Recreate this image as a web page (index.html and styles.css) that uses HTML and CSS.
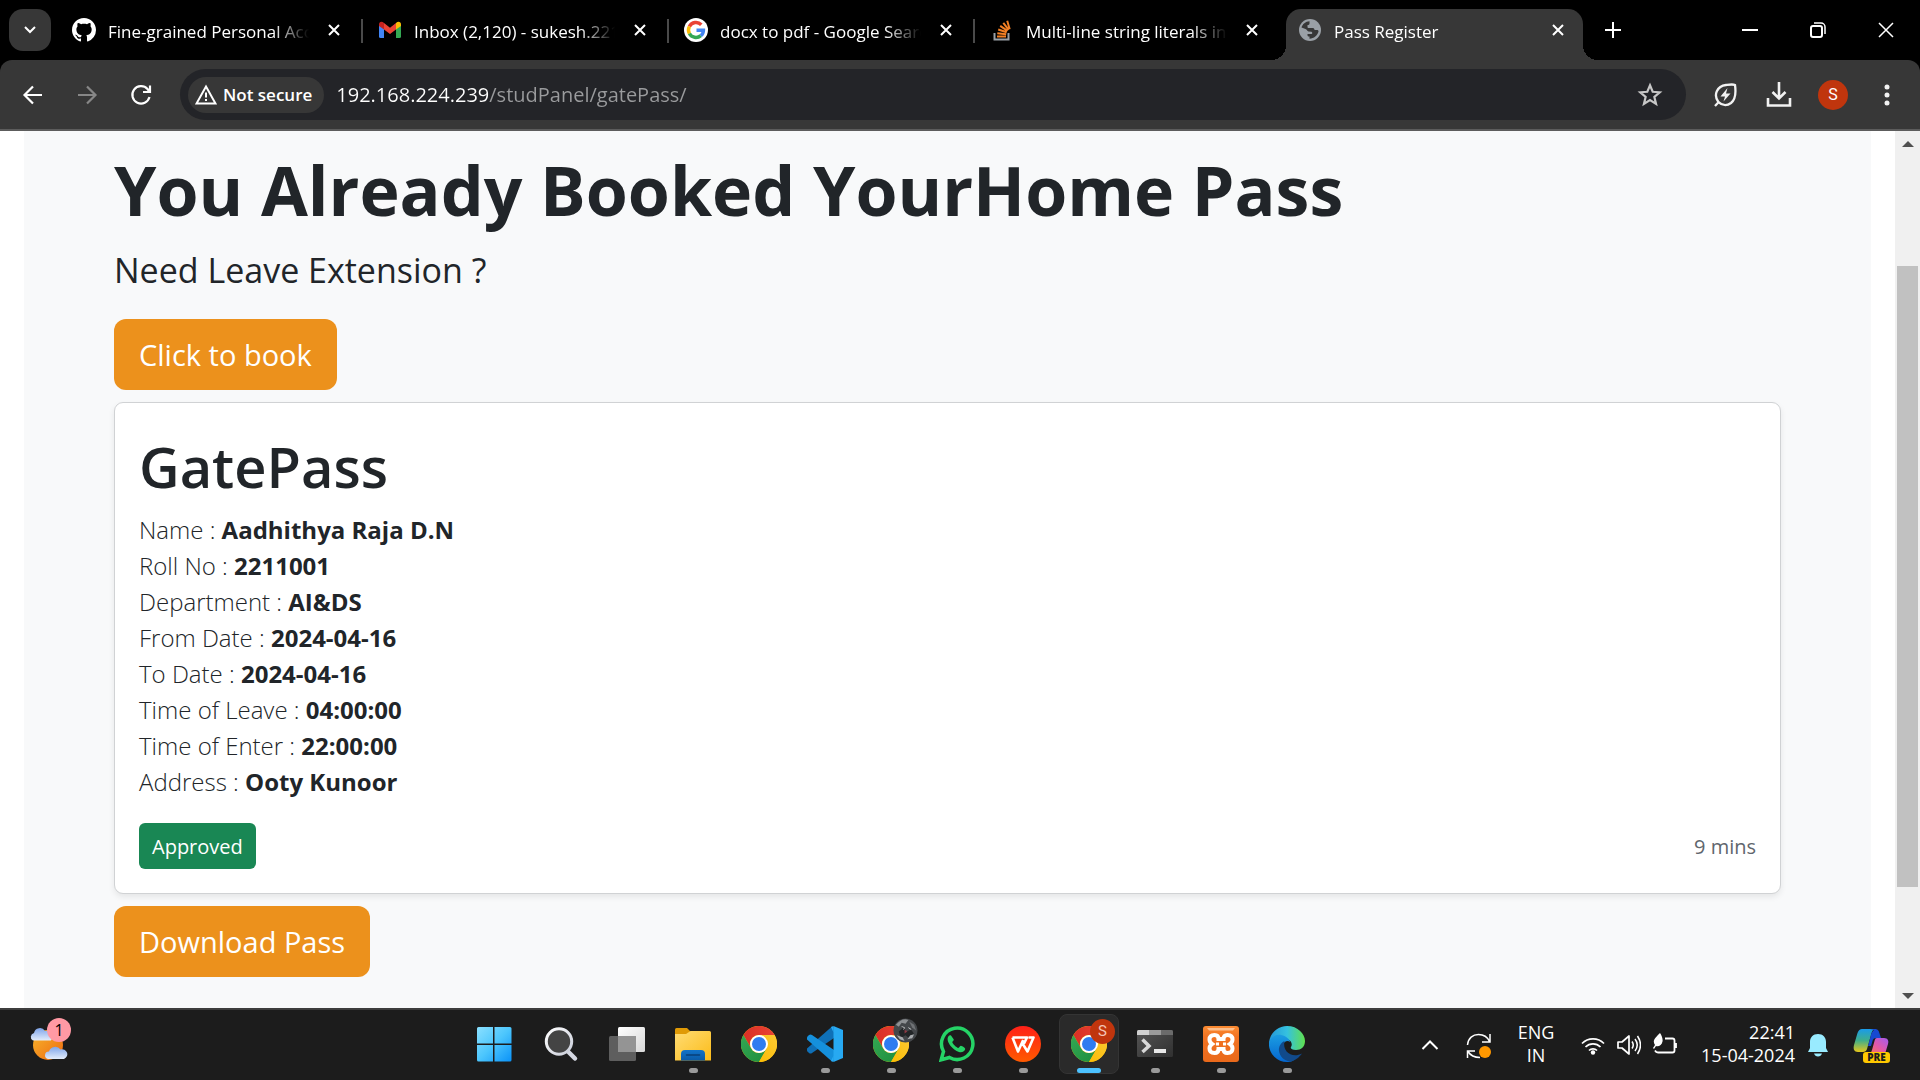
FILE: index.html
```html
<!DOCTYPE html>
<html lang="en">
<head>
<meta charset="utf-8">
<meta name="viewport" content="width=device-width, initial-scale=1">
<title>Pass Register</title>
<link rel="stylesheet" href="styles.css">
</head>
<body>
<svg class="defs" aria-hidden="true">
  <defs>
    <linearGradient id="gRed" x1="0" y1="0" x2="1" y2="0"><stop offset="0" stop-color="#d93025"/><stop offset="1" stop-color="#ea4335"/></linearGradient>
    <linearGradient id="gYellow" x1="0" y1="1" x2="1" y2="0"><stop offset="0" stop-color="#fbbc04"/><stop offset="1" stop-color="#fcc934"/></linearGradient>
    <linearGradient id="gGreen" x1="1" y1="1" x2="0" y2="0"><stop offset="0" stop-color="#1e8e3e"/><stop offset="1" stop-color="#34a853"/></linearGradient>
    <linearGradient id="gWin" x1="0" y1="0" x2="1" y2="1"><stop offset="0" stop-color="#8be0ff"/><stop offset=".5" stop-color="#4cc6fd"/><stop offset="1" stop-color="#0a92f8"/></linearGradient>
    <linearGradient id="gLens" x1="0" y1="0" x2="1" y2="1"><stop offset="0" stop-color="#fff"/><stop offset="1" stop-color="#c8ccd8"/></linearGradient>
    <linearGradient id="gPane" x1="0" y1="0" x2="1" y2="1"><stop offset="0" stop-color="#fff"/><stop offset="1" stop-color="#d8d8d8"/></linearGradient>
    <linearGradient id="gFolder" x1="0" y1="0" x2="1" y2="1"><stop offset="0" stop-color="#ffdc74"/><stop offset="1" stop-color="#fcbc19"/></linearGradient>
    <linearGradient id="gTray" x1="0" y1="0" x2="0" y2="1"><stop offset="0" stop-color="#1173c9"/><stop offset="1" stop-color="#0a5aa6"/></linearGradient>
    <linearGradient id="gWps" x1="0" y1="0" x2="0" y2="1"><stop offset="0" stop-color="#ff2018"/><stop offset="1" stop-color="#ff5a00"/></linearGradient>
    <linearGradient id="gXampp" x1="0" y1="0" x2="0" y2="1"><stop offset="0" stop-color="#fb8b32"/><stop offset=".3" stop-color="#f37322"/><stop offset="1" stop-color="#e9691b"/></linearGradient>
    <linearGradient id="gTerm" x1="0" y1="0" x2="1" y2="1"><stop offset="0" stop-color="#555"/><stop offset="1" stop-color="#303030"/></linearGradient>
    <linearGradient id="gEdgeTop" x1="0" y1="0" x2="1" y2="0"><stop offset="0" stop-color="#2497d8"/><stop offset=".5" stop-color="#35c1e0"/><stop offset="1" stop-color="#60e04e"/></linearGradient>
    <linearGradient id="gEdgeLeft" x1="0" y1="0" x2="0" y2="1"><stop offset="0" stop-color="#1b9de2"/><stop offset="1" stop-color="#0566cf"/></linearGradient>
    <linearGradient id="gSun" x1="0" y1="0" x2="1" y2="1"><stop offset="0" stop-color="#f7b52c"/><stop offset="1" stop-color="#ee6a10"/></linearGradient>
    <linearGradient id="gCloud" x1="0" y1="0" x2="0" y2="1"><stop offset="0" stop-color="#7fa5ea"/><stop offset="1" stop-color="#e4edfb"/></linearGradient>
    <linearGradient id="gPilotA" x1="0" y1="0" x2="0" y2="1"><stop offset="0" stop-color="#1a9bea"/><stop offset=".5" stop-color="#3fae8a"/><stop offset="1" stop-color="#e6c61a"/></linearGradient>
    <linearGradient id="gPilotB" x1="1" y1="0" x2="0" y2="1"><stop offset="0" stop-color="#a45cf0"/><stop offset=".5" stop-color="#e358a8"/><stop offset="1" stop-color="#fb7a4a"/></linearGradient>
    <symbol id="close" viewBox="0 0 16 16"><path d="M3 3l10 10M13 3L3 13" stroke="currentColor" stroke-width="2" fill="none"/></symbol>
    <symbol id="chrome" viewBox="0 0 36 36">
      <circle cx="18" cy="18" r="18" fill="#fbbc04"/>
      <path d="M18 9H33.6A18 18 0 0 0 2.4 9L10.2 22.5A9 9 0 0 1 18 9z" fill="url(#gRed)"/>
      <path d="M25.8 22.5L18 36A18 18 0 0 1 2.4 9l7.8 13.5a9 9 0 0 0 15.6 0z" fill="url(#gGreen)"/>
      <path d="M18 9H33.6A18 18 0 0 1 18 36l7.8-13.5A9 9 0 0 0 18 9z" fill="url(#gYellow)"/>
      <circle cx="18" cy="18" r="9" fill="#fff"/><circle cx="18" cy="18" r="7" fill="#2f7cf0"/>
    </symbol>
  </defs>
</svg>

<header class="browser">
  <div class="tabstrip">
    <button class="tab-search" aria-label="Search tabs"><svg width="16" height="16" viewBox="0 0 16 16"><path d="M3 5l5 5 5-5" stroke="#fff" stroke-width="2" fill="none"/></svg></button>
    <div class="tabs">
      <div class="tab">
        <svg class="favicon" viewBox="0 0 16 16"><path fill="#fff" d="M8 0C3.58 0 0 3.58 0 8c0 3.54 2.29 6.53 5.47 7.59.4.07.55-.17.55-.38 0-.19-.01-.82-.01-1.49-2.01.37-2.53-.49-2.69-.94-.09-.23-.48-.94-.82-1.13-.28-.15-.68-.52-.01-.53.63-.01 1.08.58 1.23.82.72 1.21 1.87.87 2.33.66.07-.52.28-.87.51-1.07-1.78-.2-3.64-.89-3.64-3.95 0-.87.31-1.59.82-2.15-.08-.2-.36-1.02.08-2.12 0 0 .67-.21 2.2.82.64-.18 1.32-.27 2-.27s1.36.09 2 .27c1.53-1.04 2.2-.82 2.2-.82.44 1.1.16 1.92.08 2.12.51.56.82 1.27.82 2.15 0 3.07-1.87 3.75-3.65 3.95.29.25.54.73.54 1.48 0 1.07-.01 1.93-.01 2.2 0 .21.15.46.55.38A8.01 8.01 0 0 0 16 8c0-4.42-3.58-8-8-8z"/></svg>
        <span class="tab-title">Fine-grained Personal Access Tokens</span>
        <button class="icon-button" aria-label="Close tab"><svg width="16" height="16"><use href="#close"/></svg></button>
      </div>
      <div class="tab">
        <svg class="favicon" viewBox="0 0 24 24"><path fill="#4285f4" d="M1 7v11.500q0 1.500 1.500 1.500H6v-9.500z"/><path fill="#34a853" d="M18 10.500V20h3.500q1.500 0 1.500-1.500V7z"/><path fill="#ea4335" d="M6 5l6 4.700L18 5v6.500l-6 4.500-6-4.500z"/><path fill="#c5221f" d="M1 6.500C1 3.500 4 3 6 5v6.500L1 8z"/><path fill="#fbbc04" d="M23 6.500C23 3.500 20 3 18 5v6.500L23 8z"/></svg>
        <span class="tab-title">Inbox (2,120) - sukesh.2211001</span>
        <button class="icon-button" aria-label="Close tab"><svg width="16" height="16"><use href="#close"/></svg></button>
      </div>
      <div class="tab">
        <svg class="favicon" viewBox="0 0 24 24"><circle cx="12" cy="12" r="12" fill="#fff"/><g fill="none" stroke-width="3.500"><path stroke="#ea4335" d="M5.400 8.500A7.400 7.400 0 0 1 17.300 6.800"/><path stroke="#fbbc04" d="M5.400 15.500A7.400 7.400 0 0 1 5.400 8.500"/><path stroke="#34a853" d="M16.800 17.600A7.400 7.400 0 0 1 5.400 15.500"/><path stroke="#4285f4" d="M12.500 12.200h6.900c0 2.300-1 4.200-2.600 5.400"/></g></svg>
        <span class="tab-title">docx to pdf - Google Search</span>
        <button class="icon-button" aria-label="Close tab"><svg width="16" height="16"><use href="#close"/></svg></button>
      </div>
      <div class="tab">
        <svg class="favicon" viewBox="0 0 24 24"><path d="M4.500 15v6.500h14V15" fill="none" stroke="#9aa0a6" stroke-width="2"/><path d="M7 18.500h9M7.300 15.200l8.900 1M8.200 11.500l8.500 2.800M10.200 7.800l7.300 5M13.300 4.800l5.400 7M17.200 2.800l2.500 8.500" stroke="#f48024" stroke-width="2"/></svg>
        <span class="tab-title">Multi-line string literals in PHP</span>
        <button class="icon-button" aria-label="Close tab"><svg width="16" height="16"><use href="#close"/></svg></button>
      </div>
      <div class="tab active">
        <svg class="favicon" viewBox="0 0 24 24"><circle cx="12" cy="12" r="11" fill="#9aa0a6"/><path d="M3.500 9.500C4.500 6 7.500 3.500 11.500 3.200v2.300c0 1-1 1.500-2 1.500v2c0 .8.500 1 1.200 1h4.300c1 0 1.500 1 1.500 2h2.500c1 0 1.500.500 1.500 1.500-1 4-4.500 7-9 7.200v-2.200c-1.500 0-2-.500-2-1.500v-1h4c1 0 1-2 0-2.200l-3-.300c-1.500-.500-1.500-2-3-2.500z" fill="#373737"/></svg>
        <span class="tab-title">Pass Register</span>
        <button class="icon-button" aria-label="Close tab"><svg width="16" height="16"><use href="#close"/></svg></button>
      </div>
    </div>
    <button class="icon-button new-tab" aria-label="New tab"><svg width="16" height="16" viewBox="0 0 16 16"><path d="M8 0v16M0 8h16" stroke="#fff" stroke-width="2"/></svg></button>
    <div class="window-controls">
      <button aria-label="Minimize"><svg width="16" height="16" viewBox="0 0 16 16"><path d="M0 8h16" stroke="#fff" stroke-width="2"/></svg></button>
      <button aria-label="Restore"><svg width="16" height="16" viewBox="0 0 16 16"><rect x="1" y="4" width="11" height="11" rx="2" fill="none" stroke="#fff" stroke-width="2"/><path d="M4 1h7a4 4 0 0 1 4 4v7" fill="none" stroke="#fff" stroke-width="1.500"/></svg></button>
      <button aria-label="Close"><svg width="16" height="16" viewBox="0 0 16 16"><path d="M1 1l14 14M15 1L1 15" stroke="#fff" stroke-width="1.500"/></svg></button>
    </div>
  </div>
  <div class="toolbar">
    <button class="nav-button" aria-label="Back"><svg width="24" height="24" viewBox="0 0 24 24"><path d="M21 12H4M12 3.500L3.500 12l8.500 8.500" stroke="#fff" stroke-width="2.200" fill="none"/></svg></button>
    <button class="nav-button" aria-label="Forward"><svg width="24" height="24" viewBox="0 0 24 24"><path d="M3 12h17M12 3.500l8.500 8.500-8.500 8.500" stroke="#878787" stroke-width="2.200" fill="none"/></svg></button>
    <button class="nav-button" aria-label="Reload"><svg width="24" height="24" viewBox="0 0 24 24"><path d="M20.500 14A8.700 8.700 0 1 1 18.500 6l1.500 2M21 2.500V9h-7" stroke="#fff" stroke-width="2.200" fill="none"/></svg></button>
    <div class="omnibox">
      <button class="security"><svg width="22" height="22" viewBox="0 0 22 22"><path d="M11 2.500L20.500 19.500H1.500z" fill="none" stroke="#fff" stroke-width="2"/><path d="M11 8.500v5M11 15v2" stroke="#fff" stroke-width="2"/></svg><span>Not secure</span></button>
      <input class="address" type="text" aria-label="Address" value="192.168.224.239/studPanel/gatePass/">
      <button class="icon-button" aria-label="Bookmark"><svg width="26" height="26" viewBox="0 0 24 24"><path d="M12 3l2.500 6 6.500.500-5 4.200 1.600 6.500L12 16.700l-5.600 3.500L8 13.700 3 9.500 9.500 9z" fill="none" stroke="#c7c7c7" stroke-width="2"/></svg></button>
    </div>
    <div class="actions">
      <button aria-label="Energy saver"><svg width="26" height="26" viewBox="0 0 26 26"><path d="M3 24l3.500-3.800C1 13 5 4 14 3c4-.5 7-1 9 0 1 7 1 14-4 18-4 3-9 2.500-12.500-.8" fill="none" stroke="#f2f2f2" stroke-width="2.300"/><path d="M15.500 6l-7 8.500h4.500L11.500 19.500 18.500 11.500H14z" fill="#f2f2f2"/></svg></button>
      <button aria-label="Downloads"><svg width="26" height="26" viewBox="0 0 26 26"><path d="M13 0v16M6.500 10l6.500 6.500 6.500-6.500M2 16v7.500h22V16" fill="none" stroke="#f2f2f2" stroke-width="2.600"/></svg></button>
      <button aria-label="Profile"><span class="avatar">S</span></button>
      <button aria-label="Menu"><svg width="26" height="26" viewBox="0 0 26 26"><g fill="#f2f2f2"><circle cx="13" cy="5" r="2.500"/><circle cx="13" cy="13" r="2.500"/><circle cx="13" cy="21" r="2.500"/></g></svg></button>
    </div>
  </div>
</header>

<div class="viewport">
  <main class="panel">
    <h1>You Already Booked YourHome Pass</h1>
    <p class="lead">Need Leave Extension ?</p>
    <a class="action" href="#book">Click to book</a>
    <section class="card">
      <h2>GatePass</h2>
      <p class="details">
        Name : <strong>Aadhithya Raja D.N</strong><br>
        Roll No : <strong>2211001</strong><br>
        Department : <strong>AI&amp;DS</strong><br>
        From Date : <strong>2024-04-16</strong><br>
        To Date : <strong>2024-04-16</strong><br>
        Time of Leave : <strong>04:00:00</strong><br>
        Time of Enter : <strong>22:00:00</strong><br>
        Address : <strong>Ooty Kunoor</strong>
      </p>
      <div class="card-foot">
        <button class="status">Approved</button>
        <small>9 mins</small>
      </div>
    </section>
    <a class="action" href="#download">Download Pass</a>
  </main>
  <div class="scrollbar" aria-hidden="true">
    <svg width="16" height="8" viewBox="0 0 16 8"><path d="M8 1l6 6H2z" fill="#505050"/></svg>
    <div class="track"><div class="thumb"></div></div>
    <svg width="16" height="8" viewBox="0 0 16 8"><path d="M8 7l6-6H2z" fill="#505050"/></svg>
  </div>
</div>

<footer class="taskbar">
  <div class="widgets">
    <button class="widget" aria-label="Weather">
      <svg width="38" height="38" viewBox="0 0 38 38"><circle cx="18" cy="20" r="15" fill="url(#gSun)"/><path d="M3 15.500a4 4 0 0 1 1-7.500 6 6 0 0 1 11-2 5 5 0 0 1 6 6 2.500 2.500 0 0 1 0 3.500z" fill="url(#gCloud)"/><path d="M18 34a3.800 3.800 0 0 1 1-7.500 6.500 6.500 0 0 1 11.500-2 5 5 0 0 1 3.500 9.500z" fill="url(#gCloud)"/></svg>
      <span class="count">1</span>
    </button>
  </div>
  <nav class="apps" aria-label="Applications">
    <button class="app" aria-label="Start"><svg viewBox="0 0 36 36"><path d="M0 2.500Q0 1 1.500 1H16v16.500H0zM17.500 1H33q1.500 0 1.500 1.500v15h-17zM0 19h16v16.500H1.500Q0 35.500 0 34zM17.500 19h17v15q0 1.500-1.500 1.500H17.500z" fill="url(#gWin)"/></svg></button>
    <button class="app" aria-label="Search"><svg viewBox="0 0 36 36"><path d="M24 24.500l8 8" stroke="#d5d8e2" stroke-width="4.500" stroke-linecap="round"/><circle cx="16" cy="15.500" r="12.700" fill="#444" stroke="url(#gLens)" stroke-width="3"/></svg></button>
    <button class="app" aria-label="Task view"><svg viewBox="0 0 36 36"><rect x="9" y="1" width="27" height="25" rx="1.500" fill="url(#gPane)"/><rect y="10" width="27" height="25" rx="1.500" fill="#686868" fill-opacity=".88"/><path d="M9 10h18v16H9z" fill="#949494"/></svg></button>
    <button class="app running" aria-label="File Explorer"><svg viewBox="0 0 36 36"><path d="M0 3.500Q0 2 1.500 2H12l4 4-2 3H0z" fill="#e09a06"/><path d="M0 8h11l4.500-3H34.500Q36 5 36 6.500V34.500H0z" fill="url(#gFolder)"/><path d="M6 34.500V28q0-4 4-4h16q4 0 4 4v6.500z" fill="url(#gTray)"/><path d="M11.500 29h13" stroke="#083f78" stroke-width="1.500" stroke-linecap="round"/></svg></button>
    <button class="app" aria-label="Chrome"><svg><use href="#chrome"/></svg></button>
    <button class="app running" aria-label="Visual Studio Code"><svg viewBox="0 0 36 36"><path d="M0 22.500L25 .5l2 1v10.500L5 27q-1.500 1-3 0L.5 25.500q-1-1.500-.5-3z" fill="#0f70b7"/><path d="M0 13.500L25 35.500l2-1V24L5 9q-1.500-1-3 0L.5 10.500q-1 1.500-.5 3z" fill="#1590dc"/><path d="M26.500 0L36 4v28l-9.500 4z" fill="#27a9f2"/><path d="M26.500 0v36l-2.500-1 2.500-5.500V6.500L24 1z" fill="#27a9f2"/></svg></button>
    <button class="app running" aria-label="Chrome, second profile"><svg><use href="#chrome"/></svg>
      <svg class="badge" viewBox="0 0 26 26"><circle cx="13" cy="13" r="12.500" fill="#44474a"/><path d="M3 7C7 2 12 0 16 2l-3 4-4-1-3 4z" fill="#8d9093"/><path d="M17 4l5 3 2 6-4-3z" fill="#6f7275"/><path d="M6 14l5-4 3 4 5-2 3 5-4 5-5-4-5 3z" fill="#222527"/><path d="M4 18l3 4 5 2-2-4zM15 22l5-1 2-4-4 1z" fill="#a8abae"/><path d="M9 9l3 1-1 2M16 10l3 2" stroke="#c9cbcd" stroke-width="1"/><path d="M12 12l3 2-3 2z" fill="#8d3b45"/></svg></button>
    <button class="app running" aria-label="WhatsApp"><svg viewBox="0 0 36 36"><path d="M2.200 33.800l2.300-8.300A15.700 15.700 0 1 1 10.500 31.500z" fill="none" stroke="#25d366" stroke-width="3.500"/><path d="M12 9.500c-1-.5-2 0-2.700 1-3 5 4.700 13.500 10.700 15.500 3 1 6-1 6.200-3 .1-1.400-3-3-4.200-3.200-1-.1-1.800 2.200-2.700 2.200-2-.5-5.500-4-6-5.700 0-1 1.700-1.500 1.500-2.800z" fill="#25d366"/></svg></button>
    <button class="app running" aria-label="WPS Office"><svg viewBox="0 0 36 36"><circle cx="18" cy="18" r="18" fill="url(#gWps)"/><path d="M7.500 11.500h14.500l-3 6M7.500 11.500L13 25.500 18.200 14M17.500 17.500l5 8 6-14h-5" fill="none" stroke="#fff" stroke-width="2.600" stroke-linejoin="round"/></svg></button>
    <button class="app running current" aria-label="Chrome, Pass Register"><svg><use href="#chrome"/></svg><span class="badge initial">S</span></button>
    <button class="app running" aria-label="Terminal"><svg viewBox="0 0 36 36"><rect y="4" width="36" height="27" rx="1.500" fill="url(#gTerm)"/><path d="M0 9V5.500Q0 4 1.500 4H12v5z" fill="#d0d0d0"/><path d="M12 4h12v5H12z" fill="#9b9b9b"/><path d="M24 4h10.500Q36 4 36 5.500V9H24z" fill="#6b6b6b"/><path d="M5.500 13.500l6.500 6.500-6.500 6" fill="none" stroke="#d8d8d8" stroke-width="3.500"/><path d="M17 23h12v4H17z" fill="#e8e8e8"/></svg></button>
    <button class="app running" aria-label="XAMPP"><svg viewBox="0 0 36 36"><rect width="36" height="36" rx="3" fill="url(#gXampp)"/><path d="M4 2h28l-2 2.500H6z" fill="#fdc08d"/><path d="M11.500 9c3 0 4 1.500 4 4h5c0-2.500 1-4 4-4 3.500 0 5 2 5 4.500 0 2-1 3.500-2.500 4.500 1.500 1 2.500 2.500 2.500 4.500 0 2.500-1.500 4.500-5 4.500-3 0-4-1.500-4-4h-5c0 2.500-1 4-4 4-3.500 0-5-2-5-4.500 0-2 1-3.500 2.500-4.500-1.500-1-2.500-2.500-2.500-4.500C6.500 11 8 9 11.500 9z" fill="none" stroke="#fff" stroke-width="4"/><path d="M13 18h3M20 18h3" stroke="#fff" stroke-width="3"/></svg></button>
    <button class="app running" aria-label="Edge"><svg viewBox="0 0 36 36"><path d="M0 18C0 8 8 0 18 0c11 0 18 8 18 15 0 6-4 9-9 9-4 0-6-1.500-5-3 2-3 0-8-6-8C8 13 1 17 0 22z" fill="url(#gEdgeTop)"/><path d="M0 18c1-7 7-10 12-9 6 1 9 5 9 7-2-2-6-1-7 3-2 6 3 14 11 15-3 2-5 2-7 2A18 18 0 0 1 0 18z" fill="url(#gEdgeLeft)"/><path d="M15.500 15c-4 2-6 6-5.500 10 .7 5 5 10 11 10.500 5-.5 9-4 12-8-9 5-20-1-17.500-12.500z" fill="#114a8b"/></svg></button>
  </nav>
  <div class="tray">
    <button class="tray-icon" aria-label="Hidden icons"><svg width="24" height="24" viewBox="0 0 24 24"><path d="M4.500 16L12 8.500 19.500 16" fill="none" stroke="#fff" stroke-width="2"/></svg></button>
    <button class="tray-icon sync" aria-label="Updates"><svg width="26" height="26" viewBox="0 0 26 26"><path d="M1.500 12C2 5 7 1.500 12.500 1.500 18 1.500 21.500 4 23.500 8.500M24 1v8h-8M1.500 25v-7H9M2 18.500c3 5 7 6 12 6" fill="none" stroke="#fff" stroke-width="1.500"/><circle cx="19" cy="19" r="6" fill="#ff9800"/></svg></button>
    <button class="language"><span>ENG</span><span>IN</span></button>
    <button class="quick" aria-label="Network, sound and battery">
      <svg width="24" height="24" viewBox="0 0 24 24"><path d="M1 10.500a15.500 15.500 0 0 1 22 0M4.500 14a10.600 10.600 0 0 1 15 0M8 17.500a5.600 5.600 0 0 1 8 0" fill="none" stroke="#fff" stroke-width="1.700"/><circle cx="12" cy="19.500" r="2.200" fill="#fff"/></svg>
      <svg width="24" height="24" viewBox="0 0 24 24"><path d="M1 9h4l7-6v18l-7-6H1z" fill="none" stroke="#fff" stroke-width="1.700" stroke-linejoin="round"/><path d="M15 8.500q2.500 3.500 0 7M18 6q4.500 6 0 12M20.500 3q6 9 0 18" fill="none" stroke="#fff" stroke-width="1.500"/></svg>
      <svg width="24" height="24" viewBox="0 0 24 24"><path d="M12 5.500h7.500q2 0 2 2v10q0 2-2 2H5q-2 0-3-2M23 10v5" fill="none" stroke="#fff" stroke-width="1.800"/><path d="M7 0c2 3 3 6 2.500 8.500C9 12 5.500 14 3 13l-2 3-1-1 2-3C-1 8 2 5 7 0z" fill="#fff"/></svg>
    </button>
    <button class="clock"><span>22:41</span><span>15-04-2024</span></button>
    <button class="tray-icon bell" aria-label="Notifications"><svg width="24" height="24" viewBox="0 0 24 24"><path d="M12 1c5 0 8 3.500 8 8v6l2 4H2l2-4V9c0-4.500 3-8 8-8z" fill="#99ebff"/><path d="M8 20.500h8q-1 3-4 3t-4-3z" fill="#99ebff"/></svg></button>
    <button class="copilot" aria-label="Copilot"><svg width="36" height="36" viewBox="0 0 36 36"><path d="M9 2h14c-3 0-4 2-5 6l-4 14c-.5 2-2 3-4 3H5c-4 0-5-3-4-7L4.500 6C5.500 3.500 7 2 9 2z" fill="url(#gPilotA)"/><path d="M17 2h5c3 0 4 2 5 6l1 3h-5c-2 0-3 1-3.500 3l-1.500 5h-3l3-11c.500-2 1.500-4 3-5z" fill="#1749d2"/><path d="M24 11h7c4 0 5 3 4 6l-3 10H14c3 0 4-1 5-4l2.500-9c.500-2 1-3 2.500-3z" fill="url(#gPilotB)"/></svg><span class="pre">PRE</span></button>
  </div>
</footer>
</body>
</html>
```
FILE: styles.css
```css
* { box-sizing: border-box; }

body {
  margin: 0;
  min-height: 100vh;
  display: flex;
  flex-direction: column;
  background: #fff;
  color: #212529;
  font-family: "Open Sans", "Noto Sans", sans-serif;
}

button {
  border: 0;
  padding: 0;
  background: none;
  color: inherit;
  font: inherit;
}

svg { display: block; }
.defs { position: absolute; width: 0; height: 0; }

/* Browser chrome */
.browser { background: #000; color: #fff; font-size: 17px; }

.tabstrip { display: flex; height: 60px; }

.tab-search {
  display: grid;
  place-items: center;
  width: 42px;
  height: 42px;
  margin: 9px 6px 9px 9px;
  border-radius: 14px;
  background: #373737;
}

.tabs { display: flex; flex: 0 1 1530px; min-width: 0; }

.tab {
  position: relative;
  display: flex;
  flex: 0 1 306px;
  align-items: center;
  gap: 12px;
  min-width: 0;
  padding: 0 16px 0 15px;
}

.tab:not(.active):not(:nth-last-child(2))::after {
  content: "";
  position: absolute;
  top: 19px;
  right: 0;
  width: 2px;
  height: 24px;
  background: #4a4a4a;
}

.tab.active {
  flex-basis: 297px;
  margin: 9px 4px 0 5px;
  padding: 0 12px 9px 12px;
  border-radius: 15px 15px 0 0;
  background: #373737;
}

.tab.active::before,
.tab.active::after {
  content: "";
  position: absolute;
  bottom: 0;
  width: 15px;
  height: 15px;
}
.tab.active::before { right: 100%; background: radial-gradient(circle at 0 0, transparent 15px, #373737 15px); }
.tab.active::after { left: 100%; background: radial-gradient(circle at 100% 0, transparent 15px, #373737 15px); }

.favicon { flex: none; width: 24px; height: 24px; }

.tab-title {
  flex: 1;
  overflow: hidden;
  padding-top: 3px;
  white-space: nowrap;
  line-height: 24px;
  mask-image: linear-gradient(to left, transparent, #000 36px);
}

.icon-button { display: grid; place-items: center; flex: none; width: 26px; height: 26px; }
.new-tab { margin: 17px 0 0 13px; }

.window-controls { display: flex; margin-left: auto; }
.window-controls button { display: grid; place-items: center; width: 68px; height: 60px; }

.toolbar {
  display: flex;
  align-items: center;
  height: 71px;
  padding: 0 6px;
  border-bottom: 2px solid #5c5c5c;
  border-radius: 12px 12px 0 0;
  background: #373737;
}

.nav-button { display: grid; place-items: center; width: 54px; height: 48px; }

.omnibox {
  display: flex;
  flex: 1;
  align-items: center;
  height: 51px;
  margin-left: 12px;
  padding: 0 23px 0 8px;
  border-radius: 26px;
  background: #232428;
}

.security {
  display: flex;
  align-items: center;
  gap: 6px;
  height: 36px;
  padding: 0 12px 0 7px;
  border-radius: 18px;
  background: #373737;
  font-size: 17px;
  font-weight: 600;
}

.address {
  flex: 1;
  min-width: 0;
  height: 36px;
  margin-left: 12px;
  padding: 0;
  border: 0;
  outline: 0;
  background: linear-gradient(to right, #fff 152px, #9a9b9d 152px);
  background-clip: text;
  -webkit-text-fill-color: transparent;
  font: 20px "Open Sans", "Noto Sans", sans-serif;
}

.actions { display: flex; margin-left: 12px; }
.actions button { display: grid; place-items: center; width: 54px; height: 48px; }

.avatar {
  display: grid;
  place-items: center;
  width: 30px;
  height: 30px;
  border-radius: 50%;
  background: #c0350d;
  font: 16px Roboto, sans-serif;
}

/* Page */
.viewport { display: flex; flex: 1; }

.panel {
  flex: 1;
  margin: 0 24px;
  padding: 16px 90px 31px;
  background: #f8f9fa;
}

h1 { margin: 0; font-size: 68px; line-height: 86px; font-weight: 700; }
.lead { margin: 10px 0 22px; font-size: 34px; line-height: 54px; font-weight: 400; }

.action {
  display: block;
  width: fit-content;
  padding: 12px 25px;
  border-radius: 12px;
  background: #ec911c;
  color: #fff;
  font-size: 29px;
  line-height: 47px;
  text-decoration: none;
}

.card {
  margin: 12px 0;
  padding: 24px;
  border: 1px solid #d0d2d4;
  border-radius: 9px;
  background: #fff;
  box-shadow: 0 3px 6px rgba(0, 0, 0, .08);
}

h2 { margin: 3px 0 10px; font-size: 56px; line-height: 72px; font-weight: 600; }
.details { margin: 0 0 23px; font-size: 24px; line-height: 36px; font-weight: 300; }
.details strong { font-weight: 700; }

.card-foot { display: flex; align-items: center; justify-content: space-between; }
.card-foot small { color: #5f666d; font-size: 20px; }

.status {
  height: 46px;
  padding: 0 13px;
  border-radius: 6px;
  background: #198754;
  color: #fff;
  font-size: 20px;
}

.scrollbar {
  display: flex;
  flex-direction: column;
  align-items: center;
  width: 25px;
  padding: 9px 0 8px;
  background: #f0f0f0;
}
.track { flex: 1; width: 21px; padding: 118px 0 105px; }
.thumb { height: 100%; background: #c1c1c1; }

/* Taskbar */
.taskbar {
  display: grid;
  grid-template-columns: 462px auto 1fr;
  height: 72px;
  border-top: 2px solid #3d3d3d;
  background: #1c1c1c;
  color: #fff;
}

.widgets { padding: 14px 0 0 30px; }
.widget { position: relative; width: 40px; height: 40px; }
.count {
  position: absolute;
  top: -6px;
  right: -1px;
  width: 24px;
  height: 24px;
  border-radius: 50%;
  background: #ff99a4;
  color: #000;
  font-size: 16px;
  line-height: 24px;
}

.apps { display: flex; }
.app {
  position: relative;
  display: grid;
  place-items: center;
  width: 60px;
  height: 60px;
  margin: 4px 3px;
  border-radius: 8px;
}
.app > svg { width: 36px; height: 36px; }
.app.running::after {
  content: "";
  position: absolute;
  bottom: 1px;
  left: 26px;
  width: 9px;
  height: 5px;
  border-radius: 3px;
  background: #9a9a9a;
}
.app.current { border: 1px solid #343434; background: #2a2a2a; }
.app.current::after { bottom: 0; left: 17px; width: 24px; background: #4cc2ff; }

.app > .badge {
  position: absolute;
  top: 4px;
  right: 3px;
  width: 25px;
  height: 25px;
  border-radius: 50%;
}
.initial { background: #c0350d; color: #f3c4b6; font: 15px/25px Roboto, sans-serif; }

.tray { display: flex; align-items: center; justify-content: flex-end; padding-right: 31px; font-size: 18px; line-height: 23px; }
.tray-icon { display: grid; place-items: center; width: 24px; height: 24px; }
.sync { margin-left: 24px; width: 26px; }
.language { display: flex; flex-direction: column; align-items: center; width: 52px; margin-left: 18px; padding-bottom: 3px; }
.quick { display: flex; gap: 12px; margin-left: 19px; }
.clock { display: flex; flex-direction: column; align-items: flex-end; margin-left: 24px; padding-bottom: 3px; }
.bell { margin-left: 11px; }

.copilot { position: relative; margin-left: 23px; }
.pre {
  position: absolute;
  right: -1px;
  bottom: 0;
  width: 27px;
  border-radius: 3px;
  background: #ffc800;
  color: #1c1c1c;
  font-size: 10px;
  font-weight: 800;
  line-height: 11px;
}
```
